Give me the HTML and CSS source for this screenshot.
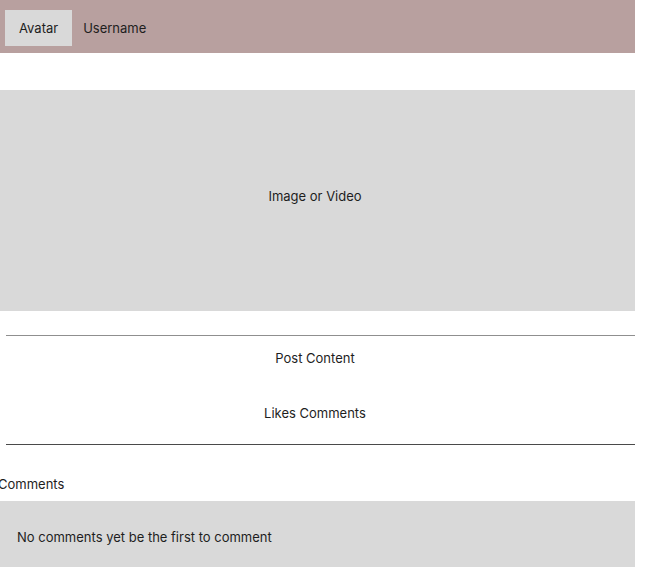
FILE: index.html
```html
<!DOCTYPE html>
<html lang="en">
<head>
<meta charset="utf-8">
<title>Post</title>
<link rel="stylesheet" href="styles.css">
</head>
<body>
<div class="page">
  <header class="header">
    <div class="avatar">Avatar</div>
    <div class="username">Username</div>
  </header>
  <div class="media">Image or Video</div>
  <div class="rule rule-light"></div>
  <section class="post">
    <p class="post-content">Post Content</p>
    <p class="post-stats">Likes Comments</p>
  </section>
  <div class="rule rule-dark"></div>
  <section class="comments">
    <h2 class="comments-title">Comments</h2>
    <div class="comments-box">No comments yet be the first to comment</div>
  </section>
</div>
</body>
</html>
```

FILE: styles.css
```css
html, body {
  margin: 0;
  padding: 0;
  background: #ffffff;
}

body {
  font-family: Inter, "Noto Sans", sans-serif;
  font-size: 13px;
  line-height: 16px;
  color: #1e1e1e;
}

.page {
  margin-left: -5px;
  width: 640px;
}

.header {
  height: 53px;
  box-sizing: border-box;
  padding: 2px 0 0 10px;
  background: #b8a09f;
  display: flex;
  align-items: center;
  gap: 11px;
}

.avatar {
  height: 36px;
  padding: 0 14px;
  background: #d9d9d9;
  display: flex;
  align-items: center;
}

.media {
  margin-top: 37px;
  height: 221px;
  box-sizing: border-box;
  padding-bottom: 10px;
  background: #d9d9d9;
  display: flex;
  align-items: center;
  justify-content: center;
}

.rule {
  margin-left: 11px;
  height: 1px;
}

.rule-light {
  margin-top: 24px;
  background: #8f8f8f;
}

.rule-dark {
  background: #4a4a4a;
}

.post {
  text-align: center;
  padding: 14px 0 23px;
}

.post p {
  margin: 0;
}

.post-stats {
  margin-top: 39px !important;
}

.comments-title {
  margin: 31px 0 9px 3px;
  font-size: 13px;
  font-weight: 400;
  line-height: 16px;
}

.comments-box {
  background: #d9d9d9;
  padding: 28px 0 22px 22px;
}
```
